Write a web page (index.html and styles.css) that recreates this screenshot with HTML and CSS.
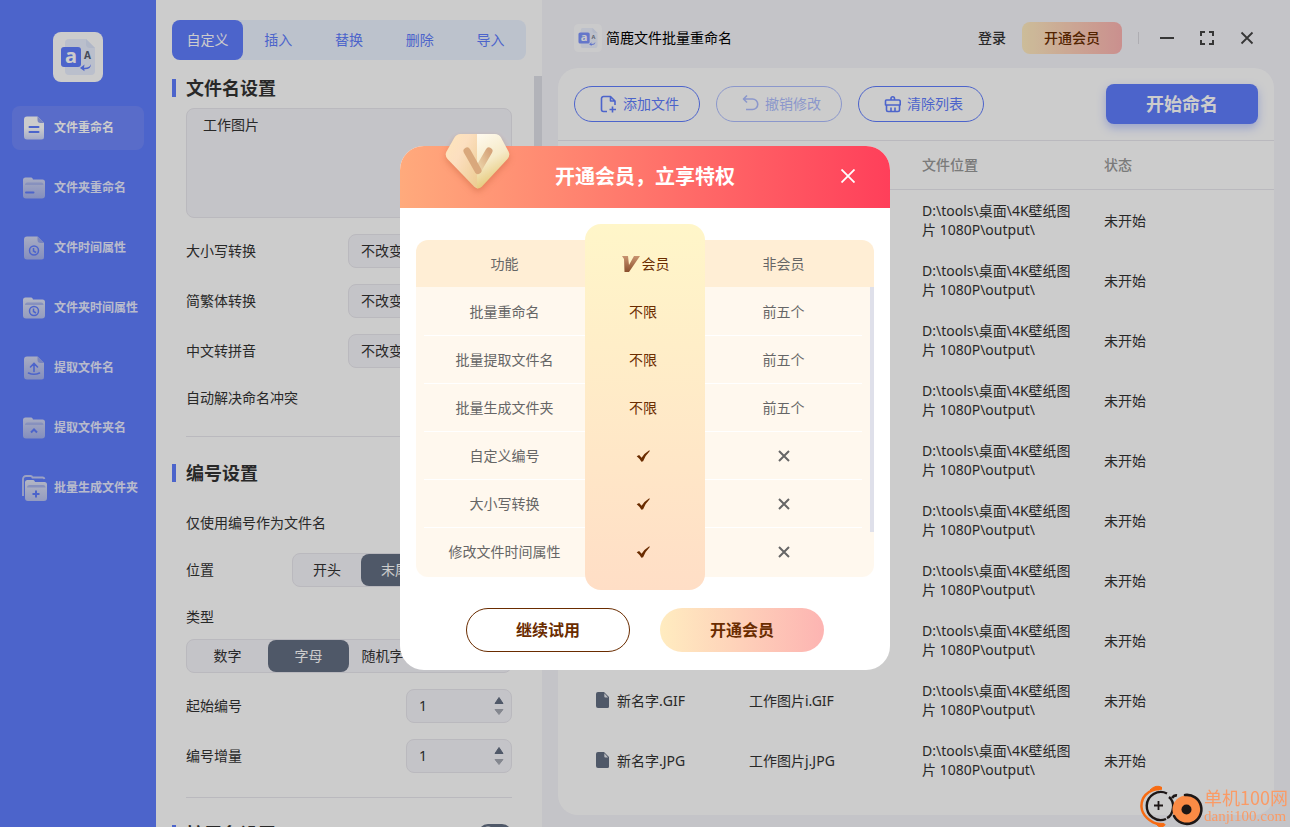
FILE: index.html
```html
<!DOCTYPE html>
<html lang="zh-CN">
<head>
<meta charset="utf-8">
<title>简鹿文件批量重命名</title>
<link rel="stylesheet" href="styles.css">
</head>
<body>
<svg class="defs" width="0" height="0" aria-hidden="true">
  <defs>
    <linearGradient id="g-on" x1="0" y1="0" x2="0" y2="1"><stop offset=".5" stop-color="#fff"/><stop offset="1" stop-color="#cdd5fb"/></linearGradient>
    <linearGradient id="g-off" x1="0" y1="0" x2="0" y2="1"><stop offset="0" stop-color="#d3d8f3"/><stop offset="1" stop-color="#a5b2ee"/></linearGradient>
    <linearGradient id="g-fold" x1="0" y1="0" x2="0" y2="1"><stop offset="0" stop-color="#e0e4f5"/><stop offset="1" stop-color="#b9c3f0"/></linearGradient>
    <symbol id="file" viewBox="0 0 22 24"><path d="M4 .5h10.500l6.500 6.500v14a2.500 2.500 0 0 1-2.500 2.500h-14.500a3 3 0 0 1-3-3v-17a3 3 0 0 1 3-3z"/><path d="M14.500 .5v3.500a3 3 0 0 0 3 3h3.500z" fill="#97a6ee"/></symbol>
    <symbol id="folder" viewBox="0 0 22 22"><path d="M2.500 .5h5.500q1.200 0 1.600 1l.4 1h9.500a2.500 2.500 0 0 1 2.500 2.500v13.500a3 3 0 0 1-3 3h-16a3 3 0 0 1-3-3v-15.500a2.500 2.500 0 0 1 2.500-2.500z"/><path d="M2 8a2.500 2.500 0 0 1 2.500-2.500h13.500a2.500 2.500 0 0 1 2.500 2.500z" fill="#a9b6ee"/></symbol>
    <symbol id="logo" viewBox="0 0 50 50">
      <rect width="50" height="50" rx="8" fill="#fff"/>
      <path d="M16 7h17l9 9v23a4 4 0 0 1-4 4h-22a4 4 0 0 1-4-4v-28a4 4 0 0 1 4-4z" fill="#e9efff"/>
      <path d="M33 7l9 9h-5a4 4 0 0 1-4-4z" fill="#dce5fb"/>
      <rect x="8" y="15" width="20" height="20" rx="3" fill="#607dfe"/>
      <text x="18" y="31" text-anchor="middle" font-family="Noto Sans" font-weight="700" font-size="20" fill="#fff">a</text>
      <text x="34.500" y="27" text-anchor="middle" font-family="Noto Sans" font-weight="700" font-size="10" fill="#555d70">A</text>
      <path d="M38 32q-1 4-7 3.800l.5-3.300-4.500 3.500 4.500 3.300-.2-2q7 .2 6.700-5.300z" fill="#607dfe"/>
    </symbol>
    <symbol id="doc" viewBox="0 0 14 16"><path d="M2 0h6l5 5v9.500a1.500 1.500 0 0 1-1.500 1.500h-9.500a2 2 0 0 1-2-2v-12a2 2 0 0 1 2-2z" fill="#636e82"/><path d="M8.300 1.200l3.800 4.300h-2.800a1 1 0 0 1-1-1z" fill="#e9ebf0"/></symbol>
    <symbol id="tick" viewBox="0 0 14 12"><path d="M.7 6.300l2.400-1.200 2.500 2.700q3-4.800 7.700-7.600l.5.700q-4.300 4.100-6.700 10.400l-1.700.4q-2-3.300-4.700-5.400z" fill="#6a2c00"/></symbol>
    <symbol id="cross" viewBox="0 0 12 12"><path d="M1 1l10 10M11 1L1 11" fill="none" stroke="#666" stroke-width="2"/></symbol>
  </defs>
</svg>

<div class="app">
  <aside class="sidebar">
    <svg class="logo"><use href="#logo"/></svg>
    <nav class="nav">
      <a class="nav-item active" href="#rename"><svg viewBox="0 0 22 24"><use href="#file" fill="url(#g-on)"/><path d="M6.500 11h9M6.500 16h9" stroke="#607dfe" stroke-width="2" stroke-linecap="round"/></svg>文件重命名</a>
      <a class="nav-item" href="#folder-rename"><svg viewBox="0 0 22 24"><use href="#folder" y="1" height="22" fill="url(#g-off)"/><path d="M3 16.500h7.500" stroke="#607dfe" stroke-width="2" stroke-linecap="round"/></svg>文件夹重命名</a>
      <a class="nav-item" href="#file-time"><svg viewBox="0 0 22 24"><use href="#file" fill="url(#g-off)"/><circle cx="11" cy="14.500" r="4.500" fill="none" stroke="#607dfe" stroke-width="1.500"/><path d="M10.500 12v3l2.500 1.500" fill="none" stroke="#607dfe" stroke-width="1.500"/></svg>文件时间属性</a>
      <a class="nav-item" href="#folder-time"><svg viewBox="0 0 22 24"><use href="#folder" y="1" height="22" fill="url(#g-fold)"/><circle cx="11" cy="15" r="4.500" fill="none" stroke="#607dfe" stroke-width="1.500"/><path d="M10.500 12.500v3l2.500 1.500" fill="none" stroke="#607dfe" stroke-width="1.500"/></svg>文件夹时间属性</a>
      <a class="nav-item" href="#extract"><svg viewBox="0 0 22 24"><use href="#file" fill="url(#g-off)"/><path d="M11 15.500v-7.500M7.500 11l3.500-3.500 3.500 3.500M5.500 17q5.500 2.500 11 0" fill="none" stroke="#607dfe" stroke-width="1.600" stroke-linecap="round"/></svg>提取文件名</a>
      <a class="nav-item" href="#extract-folder"><svg viewBox="0 0 22 24"><use href="#folder" y="1" height="22" fill="url(#g-off)"/><path d="M8 16.500l3-3 3 3" fill="none" stroke="#607dfe" stroke-width="2"/></svg>提取文件夹名</a>
      <a class="nav-item" href="#generate"><svg viewBox="0 0 22 24"><path d="M0 20v-17a3 3 0 0 1 3-3h4.500q1.500 0 2 1.500h10a2 2 0 0 1 2 1.500" fill="none" stroke="#c3cbf3" stroke-width="1.800"/><use href="#folder" x="2" y="3.500" width="22" height="22" fill="url(#g-fold)"/><path d="M13 14.500v7M9.500 18h7" stroke="#607dfe" stroke-width="2"/></svg>批量生成文件夹</a>
    </nav>
  </aside>

  <section class="panel">
    <div class="tabs">
      <button class="tab active">自定义</button><button class="tab">插入</button><button class="tab">替换</button><button class="tab">删除</button><button class="tab">导入</button>
    </div>
    <div class="scroll">
      <form class="settings">
        <section class="group">
          <h2>文件名设置</h2>
          <textarea class="name-box" aria-label="文件名">工作图片</textarea>
          <div class="row"><label for="case">大小写转换</label><select id="case"><option>不改变</option></select></div>
          <div class="row"><label for="hans">简繁体转换</label><select id="hans"><option>不改变</option></select></div>
          <div class="row"><label for="pinyin">中文转拼音</label><select id="pinyin"><option>不改变</option></select></div>
          <div class="row"><label for="auto">自动解决命名冲突</label><input class="switch" type="checkbox" id="auto"></div>
        </section>
        <section class="group">
          <h2>编号设置</h2>
          <div class="row first"><label for="only">仅使用编号作为文件名</label><input class="switch" type="checkbox" id="only"></div>
          <div class="row"><span>位置</span><div class="seg seg-pos"><button type="button">开头</button><button type="button" class="on">末尾</button><button type="button">自定义</button></div></div>
          <div class="stack"><div class="row"><span>类型</span></div>
          <div class="seg seg-type"><button type="button">数字</button><button type="button" class="on">字母</button><button type="button">随机字母</button><button type="button">随机数字</button></div></div>
          <div class="row"><label for="start">起始编号</label><span class="num"><input type="text" id="start" value="1"><svg viewBox="0 0 10 20"><path d="M1 7.500L5 1.500 9 7.500z" fill="#636e82" stroke="#636e82" stroke-linejoin="round"/><path d="M1 13.500L5 18.500 9 13.500z" fill="#a5a9b3" stroke="#a5a9b3" stroke-linejoin="round"/></svg></span></div>
          <div class="row"><label for="step">编号增量</label><span class="num"><input type="text" id="step" value="1"><svg viewBox="0 0 10 20"><path d="M1 7.500L5 1.500 9 7.500z" fill="#636e82" stroke="#636e82" stroke-linejoin="round"/><path d="M1 13.500L5 18.500 9 13.500z" fill="#a5a9b3" stroke="#a5a9b3" stroke-linejoin="round"/></svg></span></div>
        </section>
        <section class="group">
          <h2><label for="ext">扩展名设置</label><input class="switch" type="checkbox" id="ext"></h2>
        </section>
      </form>
      <div class="track"><div class="thumb"></div></div>
    </div>
  </section>

  <main class="main">
    <header class="titlebar">
      <svg class="app-icon"><use href="#logo"/></svg>
      <h1>简鹿文件批量重命名</h1>
      <a class="login" href="#login">登录</a>
      <button class="vip-btn">开通会员</button>
      <span class="sep"></span>
      <div class="win">
        <button aria-label="最小化"><svg viewBox="0 0 14 14"><path d="M0 7h14" stroke-width="2"/></svg></button>
        <button aria-label="最大化"><svg viewBox="0 0 14 14"><path d="M1 5V1h4M9 1h4v4M13 9v4H9M5 13H1V9" stroke-width="2"/></svg></button>
        <button aria-label="关闭"><svg viewBox="0 0 14 14"><path d="M1.500 1.500l11 11M12.500 1.500l-11 11" stroke-width="1.800"/></svg></button>
      </div>
    </header>
    <div class="card">
      <div class="toolbar">
        <button class="tool"><svg viewBox="0 0 20 20"><path d="M8 17.500H4.500a2 2 0 0 1-2-2v-11a2 2 0 0 1 2-2h7L16 7v4M11.500 2.500V7H16M13.500 12.500v6M10.500 15.500h6.500"/></svg>添加文件</button>
        <button class="tool" disabled><svg viewBox="0 0 20 20"><path d="M6 1.500l-3.500 3.500 3.500 3.500M2.500 5h9a5 5 0 0 1 0 10.500H5"/></svg>撤销修改</button>
        <button class="tool"><svg viewBox="0 0 20 20"><path d="M8 6V4.500a1.500 1.500 0 0 1 3.500 0V6M4 6h12a1.200 1.200 0 0 1 1.200 1.200V11H2.500V7.200A1.200 1.200 0 0 1 4 6zM3.500 11v5a1.500 1.500 0 0 0 1.500 1.500h10a1.500 1.500 0 0 0 1.500-1.500v-5M8 13.500v4M12 13.500v4"/></svg>清除列表</button>
        <button class="start">开始命名</button>
      </div>
      <table class="files">
        <colgroup><col class="c1"><col class="c2"><col class="c3"><col></colgroup>
        <thead><tr><th>原文件名</th><th>新文件名</th><th>文件位置</th><th>状态</th></tr></thead>
        <tbody>
          <tr><td><span class="fname"><svg><use href="#doc"/></svg>新名字.JPG</span></td><td>工作图片a.JPG</td><td>D:\tools\桌面\4K壁纸图片 1080P\output\</td><td>未开始</td></tr>
          <tr><td><span class="fname"><svg><use href="#doc"/></svg>新名字.JPG</span></td><td>工作图片b.JPG</td><td>D:\tools\桌面\4K壁纸图片 1080P\output\</td><td>未开始</td></tr>
          <tr><td><span class="fname"><svg><use href="#doc"/></svg>新名字.JPG</span></td><td>工作图片c.JPG</td><td>D:\tools\桌面\4K壁纸图片 1080P\output\</td><td>未开始</td></tr>
          <tr><td><span class="fname"><svg><use href="#doc"/></svg>新名字.JPG</span></td><td>工作图片d.JPG</td><td>D:\tools\桌面\4K壁纸图片 1080P\output\</td><td>未开始</td></tr>
          <tr><td><span class="fname"><svg><use href="#doc"/></svg>新名字.JPG</span></td><td>工作图片e.JPG</td><td>D:\tools\桌面\4K壁纸图片 1080P\output\</td><td>未开始</td></tr>
          <tr><td><span class="fname"><svg><use href="#doc"/></svg>新名字.JPG</span></td><td>工作图片f.JPG</td><td>D:\tools\桌面\4K壁纸图片 1080P\output\</td><td>未开始</td></tr>
          <tr><td><span class="fname"><svg><use href="#doc"/></svg>新名字.JPG</span></td><td>工作图片g.JPG</td><td>D:\tools\桌面\4K壁纸图片 1080P\output\</td><td>未开始</td></tr>
          <tr><td><span class="fname"><svg><use href="#doc"/></svg>新名字.JPG</span></td><td>工作图片h.JPG</td><td>D:\tools\桌面\4K壁纸图片 1080P\output\</td><td>未开始</td></tr>
          <tr><td><span class="fname"><svg><use href="#doc"/></svg>新名字.GIF</span></td><td>工作图片i.GIF</td><td>D:\tools\桌面\4K壁纸图片 1080P\output\</td><td>未开始</td></tr>
          <tr><td><span class="fname"><svg><use href="#doc"/></svg>新名字.JPG</span></td><td>工作图片j.JPG</td><td>D:\tools\桌面\4K壁纸图片 1080P\output\</td><td>未开始</td></tr>
        </tbody>
      </table>
    </div>
  </main>
</div>

<div class="overlay">
  <div class="modal" role="dialog" aria-labelledby="modal-title">
    <header class="modal-head">
      <h2 id="modal-title">开通会员，立享特权</h2>
      <button class="modal-close" aria-label="关闭"><svg viewBox="0 0 14 14"><path d="M.5 .5l13 13M13.500 .5l-13 13" stroke="#fff" stroke-width="1.800"/></svg></button>
    </header>
    <svg class="badge" viewBox="0 0 80 76">
      <defs>
        <linearGradient id="b-l" x1="0" y1="0" x2="1" y2="1"><stop offset="0" stop-color="#ffe9b8"/><stop offset=".45" stop-color="#fcdfc0"/><stop offset="1" stop-color="#e9c786"/></linearGradient>
        <linearGradient id="b-r" x1=".3" y1="0" x2=".6" y2="1"><stop offset="0" stop-color="#fffaf0"/><stop offset=".4" stop-color="#f6ebc9"/><stop offset=".7" stop-color="#e6ca7c"/><stop offset="1" stop-color="#ecd49a"/></linearGradient>
        <linearGradient id="b-v" x1="0" y1="1" x2="1" y2="0"><stop offset="0" stop-color="#eed9ae"/><stop offset="1" stop-color="#d6a57b"/></linearGradient>
        <clipPath id="b-c"><path d="M22.500 8h34.500q4 0 6 3.500l7.500 14q2 4-1 7.500L44 60.500q-4 4-8 0L9.500 33q-3-3.500-1-7.500l8-14q2-3.500 6-3.500z"/></clipPath>
      </defs>
      <g clip-path="url(#b-c)"><rect width="40" height="76" fill="url(#b-l)"/><rect x="39" width="41" height="76" fill="url(#b-r)"/></g>
      <path d="M51 25L40 44" stroke="url(#b-v)" stroke-width="7" stroke-linecap="round"/>
      <path d="M29 25L40 44.500" stroke="#d9a87c" stroke-width="7" stroke-linecap="round"/>
    </svg>
    <div class="compare">
      <table>
        <colgroup><col class="f1"><col class="f2"><col></colgroup>
        <thead><tr><th>功能</th><th class="vip"><span class="vip-name"><svg viewBox="0 0 20 18"><defs><linearGradient id="v-g" x1="0" y1="0" x2="0" y2="1"><stop offset="0" stop-color="#c99470"/><stop offset="1" stop-color="#8a4f2c"/></linearGradient></defs><path d="M1 1h6l1 9 5-9h6L8 17H3.500L3 4z" fill="url(#v-g)"/></svg>会员</span></th><th>非会员</th></tr></thead>
        <tbody>
          <tr><td>批量重命名</td><td class="vip">不限</td><td>前五个</td></tr>
          <tr><td>批量提取文件名</td><td class="vip">不限</td><td>前五个</td></tr>
          <tr><td>批量生成文件夹</td><td class="vip">不限</td><td>前五个</td></tr>
          <tr><td>自定义编号</td><td class="vip"><svg class="tick" aria-label="支持"><use href="#tick"/></svg></td><td><svg class="cross" aria-label="不支持"><use href="#cross"/></svg></td></tr>
          <tr><td>大小写转换</td><td class="vip"><svg class="tick" aria-label="支持"><use href="#tick"/></svg></td><td><svg class="cross" aria-label="不支持"><use href="#cross"/></svg></td></tr>
          <tr><td>修改文件时间属性</td><td class="vip"><svg class="tick" aria-label="支持"><use href="#tick"/></svg></td><td><svg class="cross" aria-label="不支持"><use href="#cross"/></svg></td></tr>
        </tbody>
      </table>
      <span class="compare-bar"></span>
    </div>
    <div class="actions">
      <button class="act trial">继续试用</button>
      <button class="act open">开通会员</button>
    </div>
  </div>
</div>

<div class="mark">
  <svg viewBox="0 0 64 42">
    <path d="M22 3.500C6 4 1 14 1.500 22S10 38 20 39.500" fill="none" stroke="#f76b12" stroke-width="2.500"/>
    <path d="M10 5Q16-1 22 2.500L18.500 5Q14 3.500 10 5zM15 38l9 .5q3 2-3 3.500-3 0-6-4z" fill="#f76b12" stroke="#f76b12"/>
    <path d="M27 8.500A14 14 0 1 0 26 34" fill="none" stroke="#1d1716" stroke-width="2.400"/>
    <path d="M29 12q5 4 4 11-1 8-6 10" fill="none" stroke="#1d1716" stroke-width="2.400"/>
    <path d="M18.500 16v9M14 20.500h9" stroke="#1d1716" stroke-width="1.800"/>
    <circle cx="46.500" cy="24.500" r="14" fill="#fb8b45"/>
    <path d="M45 10A14.500 14.500 0 1 1 34 31" fill="none" stroke="#1d1716" stroke-width="2.600" stroke-linecap="round"/>
    <path d="M32 13q2-3 5-2.500" fill="none" stroke="#1d1716" stroke-width="2.600"/>
    <circle cx="46.500" cy="24.500" r="5" fill="#1d1716"/>
  </svg>
  <div class="mark-text"><span class="mark-name">单机100网</span><span class="mark-url">danji100.com</span></div>
</div>
</body>
</html>
```
FILE: styles.css
```css
:root {
  --blue: #607dfe;
  --slate: #636e82;
  --field: #f6f5fb;
  --line: #e9e8ee;
  --brown: #6a2c00;
  --gold: linear-gradient(90deg, #ffecc0, #fdb4b2);
}

* { box-sizing: border-box; }

body {
  margin: 0;
  font: 14px/20px "Noto Sans", "Noto Sans CJK SC", sans-serif;
  color: #333;
  overflow: hidden;
}

button, input, select, textarea { font: inherit; color: inherit; }
button { border: 0; padding: 0; background: none; cursor: pointer; }
h1, h2 { margin: 0; }
a { color: inherit; text-decoration: none; }
table { border-collapse: separate; border-spacing: 0; table-layout: fixed; }
th, td { padding: 0; }
.defs { position: absolute; }

.app { display: flex; height: 100vh; background: var(--field); }

/* Sidebar */
.sidebar {
  width: 156px;
  flex: none;
  padding: 32px 12px;
  background: var(--blue);
  display: flex;
  flex-direction: column;
  align-items: center;
  gap: 24px;
}
.logo { width: 50px; height: 50px; flex: none; }
.nav { display: flex; flex-direction: column; gap: 16px; width: 100%; }
.nav-item {
  display: flex;
  align-items: center;
  gap: 9px;
  height: 44px;
  padding-left: 11px;
  border-radius: 8px;
  font-size: 12px;
  font-weight: 700;
  white-space: nowrap;
  color: #e6eaff;
}
.nav-item svg { width: 22px; height: 24px; flex: none; overflow: visible; }
.nav-item.active { background: #7088fc; color: #fff; }

/* Settings panel */
.panel {
  width: 386px;
  flex: none;
  background: #fff;
  padding-top: 20px;
  display: flex;
  flex-direction: column;
  gap: 16px;
}
.tabs {
  display: flex;
  flex: none;
  height: 40px;
  margin: 0 16px;
  border-radius: 8px;
  background: #ecf3ff;
}
.tab { flex: 1; border-radius: 8px; color: var(--blue); }
.tab.active { background: var(--blue); color: #fff; }
.scroll { flex: 1; min-height: 0; display: flex; overflow: hidden; }
.settings { flex: 1; padding: 0 22px 0 30px; }
.track { width: 8px; }
.thumb { height: 50%; background: #dfe0e8; }
.group { display: flex; flex-direction: column; gap: 16px; }
.group + .group { margin-top: 24px; padding-top: 24px; border-top: 1px solid var(--line); }
.group h2 {
  display: flex;
  align-items: center;
  justify-content: space-between;
  height: 24px;
  margin-left: -14px;
  font-size: 18px;
}
.group h2::before { content: ""; width: 4px; height: 18px; margin-right: 10px; background: var(--blue); }
.group h2 { justify-content: flex-start; }
.group h2 .switch { margin-left: auto; }
.name-box {
  height: 110px;
  margin-top: -8px;
  padding: 6px 16px;
  border: 1px solid var(--line);
  border-radius: 8px;
  background: var(--field);
  resize: none;
}
.row { display: flex; align-items: center; justify-content: space-between; min-height: 28px; }
.row.first { margin-top: 8px; }
.stack { display: flex; flex-direction: column; gap: 8px; }
select {
  width: 164px;
  height: 34px;
  padding: 0 12px;
  border: 1px solid var(--line);
  border-radius: 8px;
  background: var(--field);
  appearance: none;
}
.switch {
  appearance: none;
  width: 34px;
  height: 20px;
  margin: 0;
  border-radius: 10px;
  background: radial-gradient(circle at 10px 10px, #fff 7px, transparent 8px) var(--slate);
}
.seg {
  display: flex;
  height: 34px;
  border: 1px solid var(--line);
  border-radius: 8px;
  background: var(--field);
}
.seg button { flex: 1; border-radius: 8px; }
.seg .on { background: var(--slate); color: #fff; }
.seg-pos { width: 220px; }
.seg-pos button { flex: 1 0 auto; padding: 0 20px; }
.num {
  display: flex;
  align-items: center;
  width: 106px;
  height: 34px;
  padding: 0 7px 0 12px;
  border: 1px solid var(--line);
  border-radius: 8px;
  background: var(--field);
}
.num input { flex: 1; min-width: 0; border: 0; padding: 0; background: none; }
.num svg { width: 10px; height: 20px; flex: none; }

/* Main area */
.main { flex: 1; min-width: 0; display: flex; flex-direction: column; padding: 8px 16px 12px; }
.titlebar { display: flex; align-items: center; flex: none; height: 60px; padding: 0 20px 0 16px; }
.app-icon { width: 28px; height: 28px; margin-right: 4px; opacity: .8; }
.titlebar h1 { font-size: 14px; font-weight: 400; color: #000; flex: 1; }
.login { font-weight: 500; margin-right: 16px; }
.vip-btn {
  width: 100px;
  height: 32px;
  border-radius: 8px;
  background: var(--gold);
  color: var(--brown);
  font-weight: 500;
}
.sep { width: 1px; height: 12px; margin: 0 21px 0 16px; background: #dad9df; }
.win { display: flex; gap: 26px; }
.win button { width: 14px; height: 14px; }
.win svg { display: block; fill: none; stroke: #444; }

.card { flex: 1; min-height: 0; border-radius: 20px; background: #fff; overflow: hidden; }
.toolbar {
  display: flex;
  align-items: center;
  gap: 16px;
  height: 73px;
  padding: 0 16px;
  border-bottom: 1px solid var(--line);
}
.tool {
  display: flex;
  align-items: center;
  justify-content: center;
  gap: 4px;
  width: 126px;
  height: 36px;
  padding-left: 4px;
  border: 1px solid var(--blue);
  border-radius: 18px;
  color: var(--blue);
}
.tool svg { width: 20px; height: 20px; fill: none; stroke: currentColor; stroke-width: 1.6; stroke-linejoin: round; }
.tool:disabled { opacity: .5; }
.start {
  width: 152px;
  height: 40px;
  margin-left: auto;
  border-radius: 8px;
  background: var(--blue);
  box-shadow: 0 4px 10px rgba(96, 125, 254, .4);
  color: #fff;
  font-size: 18px;
  font-weight: 700;
}

.files { width: 100%; }
.files .c1 { width: 191px; }
.files .c2 { width: 173px; }
.files .c3 { width: 182px; }
.files th { height: 49px; border-bottom: 1px solid var(--line); text-align: left; color: #999; font-weight: 500; }
.files td { height: 60px; padding-right: 20px; line-height: 19px; vertical-align: middle; }
.files th:first-child, .files td:first-child { padding: 0 0 0 38px; }
.fname { display: flex; align-items: center; gap: 7px; }
.fname svg { width: 14px; height: 16px; }

/* Membership dialog */
.overlay {
  position: fixed;
  inset: 0;
  display: flex;
  align-items: center;
  justify-content: center;
  padding-bottom: 11px;
  background: rgba(0, 0, 0, .2);
}
.modal {
  position: relative;
  width: 490px;
  max-width: 100%;
  padding-bottom: 18px;
  border-radius: 24px;
  background: #fff;
}
.modal-head {
  display: flex;
  align-items: center;
  justify-content: center;
  height: 62px;
  border-radius: 24px 24px 0 0;
  background: linear-gradient(90deg, #ffaa7c, #ff3f5a);
}
.modal-head h2 { font-size: 20px; line-height: 28px; color: #fff; }
.modal-close { position: absolute; top: 23px; right: 35px; width: 14px; height: 14px; }
.modal-close svg { display: block; }
.badge {
  position: absolute;
  top: -20px;
  left: 38px;
  width: 80px;
  height: 76px;
  fill: none;
  filter: drop-shadow(0 3px 3px rgba(180, 80, 40, .35));
}
.compare {
  position: relative;
  margin: 32px 16px 31px;
  padding: 0 12px 1px 8px;
  border-radius: 12px;
  background: linear-gradient(#ffeed5 47px, #fff8ee 47px);
}
.compare::before {
  content: "";
  position: absolute;
  top: -16px;
  bottom: -13px;
  left: 169px;
  width: 120px;
  border-radius: 16px;
  background: linear-gradient(#fff6c9, #ffdec6);
}
.compare table { position: relative; width: 100%; color: #666; text-align: center; }
.compare .f1 { width: 161px; }
.compare .f2 { width: 120px; }
.compare th { height: 48px; font-weight: 400; }
.compare td { height: 48px; border-bottom: 1px solid #fff; }
.compare td.vip { padding-right: 4px; }
.compare .vip { border-bottom: 0; color: var(--brown); }
.compare tr:last-child td { border-bottom: 0; }
.vip-name { display: flex; align-items: center; justify-content: center; gap: 1px; }
.vip-name svg { width: 20px; height: 18px; }
.tick { display: block; width: 14px; height: 12px; margin: 0 auto; }
.cross { display: block; width: 12px; height: 12px; margin: 0 auto; }
.compare-bar { position: absolute; top: 47px; right: 0; width: 4px; height: 245px; background: #dfe0ea; }
.actions { display: flex; justify-content: center; gap: 30px; }
.act { width: 164px; height: 44px; border-radius: 22px; color: var(--brown); font-size: 16px; font-weight: 700; }
.trial { border: 1px solid var(--brown); }
.open { background: var(--gold); }

/* Site mark */
.mark { position: fixed; right: 2px; bottom: 0; display: flex; align-items: center; color: #fa9b66; }
.mark svg { width: 64px; height: 42px; }
.mark-text { display: flex; flex-direction: column; white-space: nowrap; }
.mark-name { font: 18px/20px "Noto Sans CJK SC", sans-serif; }
.mark-url { font: 15px/18px "Liberation Serif", serif; }
```
